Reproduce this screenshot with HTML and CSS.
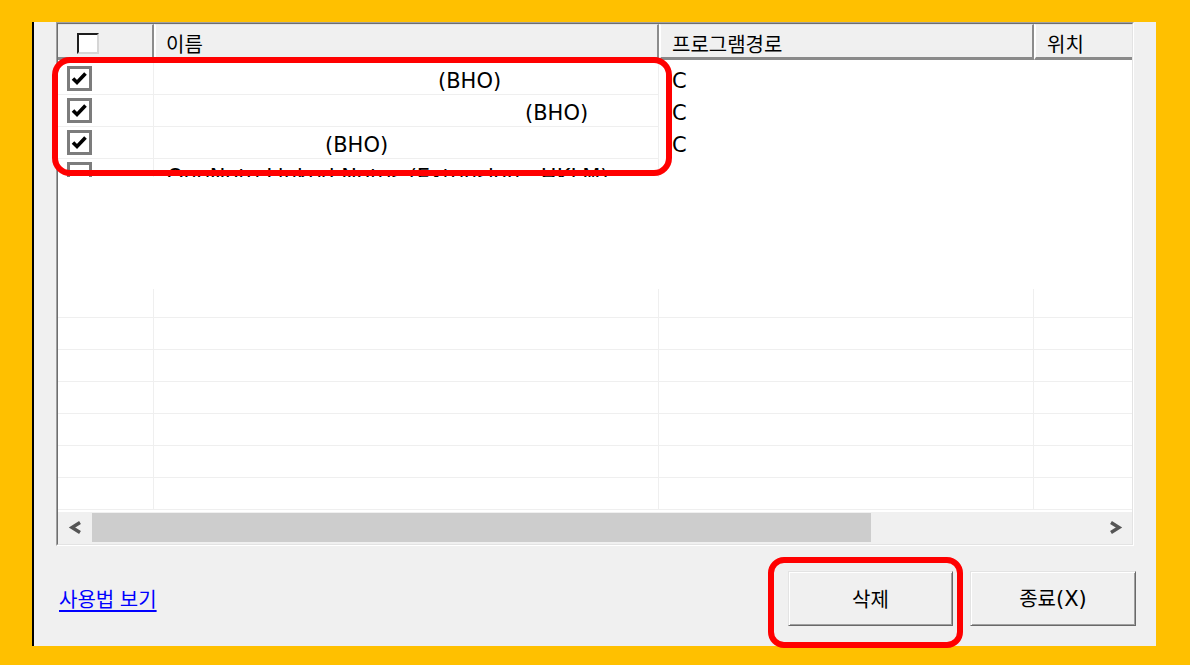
FILE: index.html
```html
<!DOCTYPE html>
<html lang="ko">
<head>
<meta charset="utf-8">
<title>BHO 목록</title>
<link rel="stylesheet" href="styles.css">
</head>
<body>
<div class="screen">
  <div class="dialog">
    <div class="listview">
      <div class="lv-inner">
        <div class="lv-header">
          <div class="hcell c1"><span class="hcheck"></span></div>
          <div class="hcell c2">이름</div>
          <div class="hcell c3">프로그램경로</div>
          <div class="hcell c4">위치</div>
        </div>
        <div class="lv-body">
          <div class="rows-top">
            <div class="row">
              <div class="cell c1"><svg class="cb" viewBox="0 0 25 25" width="25" height="25"><rect x="1.5" y="1.5" width="22" height="22" fill="#fff" stroke="#7c7c7c" stroke-width="3"/><path d="M6 12.5 L10 16.5 L18.5 7.5" fill="none" stroke="#000" stroke-width="3.6"/></svg></div>
              <div class="cell c2 txt n1">(BHO)</div>
              <div class="cell c3 txt">C</div>
              <div class="cell c4"></div>
            </div>
            <div class="row">
              <div class="cell c1"><svg class="cb" viewBox="0 0 25 25" width="25" height="25"><rect x="1.5" y="1.5" width="22" height="22" fill="#fff" stroke="#7c7c7c" stroke-width="3"/><path d="M6 12.5 L10 16.5 L18.5 7.5" fill="none" stroke="#000" stroke-width="3.6"/></svg></div>
              <div class="cell c2 txt n2">(BHO)</div>
              <div class="cell c3 txt">C</div>
              <div class="cell c4"></div>
            </div>
            <div class="row">
              <div class="cell c1"><svg class="cb" viewBox="0 0 25 25" width="25" height="25"><rect x="1.5" y="1.5" width="22" height="22" fill="#fff" stroke="#7c7c7c" stroke-width="3"/><path d="M6 12.5 L10 16.5 L18.5 7.5" fill="none" stroke="#000" stroke-width="3.6"/></svg></div>
              <div class="cell c2 txt n3">(BHO)</div>
              <div class="cell c3 txt">C</div>
              <div class="cell c4"></div>
            </div>
            <div class="row">
              <div class="cell c1"><svg class="cb" viewBox="0 0 25 25" width="25" height="25"><rect x="1.5" y="1.5" width="22" height="22" fill="#fff" stroke="#7c7c7c" stroke-width="3"/></svg></div>
              <div class="cell c2 txt n4">OneNote Linked Notes (Extension - HKLM)</div>
              <div class="cell c3"></div>
              <div class="cell c4"></div>
            </div>
          </div>
          <div class="blank"></div>
          <div class="rows-empty">
            <div class="row first"><div class="cell c1"></div><div class="cell c2"></div><div class="cell c3"></div><div class="cell c4"></div></div>
            <div class="row"><div class="cell c1"></div><div class="cell c2"></div><div class="cell c3"></div><div class="cell c4"></div></div>
            <div class="row"><div class="cell c1"></div><div class="cell c2"></div><div class="cell c3"></div><div class="cell c4"></div></div>
            <div class="row"><div class="cell c1"></div><div class="cell c2"></div><div class="cell c3"></div><div class="cell c4"></div></div>
            <div class="row"><div class="cell c1"></div><div class="cell c2"></div><div class="cell c3"></div><div class="cell c4"></div></div>
            <div class="row"><div class="cell c1"></div><div class="cell c2"></div><div class="cell c3"></div><div class="cell c4"></div></div>
            <div class="row"><div class="cell c1"></div><div class="cell c2"></div><div class="cell c3"></div><div class="cell c4"></div></div>
          </div>
        </div>
        <div class="hscroll">
          <div class="sbtn"><svg viewBox="0 0 15 13" width="15" height="13"><polyline points="12,1.5 4,6.5 12,11.5" fill="none" stroke="#555" stroke-width="3.4"/></svg></div>
          <div class="thumb"></div>
          <div class="track"></div>
          <div class="sbtn"><svg viewBox="0 0 15 13" width="15" height="13"><polyline points="3,1.5 11,6.5 3,11.5" fill="none" stroke="#555" stroke-width="3.4"/></svg></div>
        </div>
      </div>
    </div>
    <div class="footer">
      <a class="help" href="#">사용법 보기</a>
      <div class="buttons">
        <button class="btn del" type="button">삭제</button>
        <button class="btn" type="button">종료<span class="lat">(X)</span></button>
      </div>
    </div>
  </div>
  <div class="mark mark-rows"></div>
  <div class="mark mark-btn"></div>
</div>
</body>
</html>
```

FILE: styles.css
```css
* { box-sizing: border-box; }
html, body { margin: 0; padding: 0; }
body {
  background: #ffc000;
  font-family: "DejaVu Sans", "Noto Sans CJK KR", sans-serif;
}
.screen {
  position: relative;
  width: 1190px;
  height: 665px;
  overflow: hidden;
  background: #ffc000;
  padding-top: 22px;
  padding-left: 32px;
}
.dialog {
  width: 1124px;
  height: 624px;
  background: #f0f0f0;
  border-left: 2px solid #000;
  padding: 0 22px;
  display: flex;
  flex-direction: column;
}
.listview {
  width: 1078px;
  height: 524px;
  border: 1px solid;
  border-color: #a0a0a0 #ffffff #ffffff #a0a0a0;
}
.lv-inner {
  height: 100%;
  border: 1px solid;
  border-color: #6e6e6e #e3e3e3 #e3e3e3 #6e6e6e;
  background: #fff;
  display: flex;
  flex-direction: column;
}
.lv-header {
  display: flex;
  height: 36px;
  flex: none;
  background: #f0f0f0;
}
.c1 { width: 96px; }
.c2 { width: 505px; }
.c3 { width: 375px; }
.c4 { width: 98px; }
.hcell {
  height: 36px;
  border-top: 1px solid #e4e4e4;
  border-bottom: 3px solid #8a8a8a;
  padding-top: 5px;
  font-family: "Noto Sans CJK KR", sans-serif;
  font-size: 20px;
  line-height: 27px;
  color: #000;
  white-space: nowrap;
}
.hcell.c1, .hcell.c2, .hcell.c3 { border-right: 2px solid #8c8c8c; }
.hcell.c2, .hcell.c3, .hcell.c4 { border-left: 2px solid #ffffff; }
.hcell.c1 { padding-top: 8px; padding-left: 19px; }
.hcell.c2 { padding-left: 10px; }
.hcell.c3 { padding-left: 11px; }
.hcell.c4 { padding-left: 11px; }
.hcheck {
  display: block;
  width: 22px;
  height: 21px;
  background: #fff;
  border: 2px solid;
  border-color: #1e1e1e #d6d6d6 #d6d6d6 #1e1e1e;
}
.lv-body {
  flex: none;
  height: 452px;
  padding-top: 3px;
}
.rows-top {
  height: 114px;
  overflow: hidden;
}
.row {
  display: flex;
  height: 32px;
}
.cell {
  height: 100%;
  border-bottom: 1px solid #efefef;
  display: flex;
  align-items: center;
  white-space: nowrap;
}
.cell.c1, .cell.c2, .cell.c3 { border-right: 1px solid #efefef; }
.rows-top .cell.c3, .rows-top .cell.c4 { border-bottom-color: transparent; }
.rows-top .cell.c3 { border-right-color: transparent; }
.rows-top .cell.c1 { padding-left: 9px; }
.cb { display: block; }
.txt {
  font-size: 21px;
  color: #000;
  overflow: hidden;
  padding-top: 4px;
}
.n1 { padding-left: 284px; }
.n2 { padding-left: 371px; }
.n3 { padding-left: 171px; }
.n4 { padding-left: 13px; }
.rows-top .cell.c3 { padding-left: 13px; }
.blank { height: 112px; }
.rows-empty .row.first { height: 29px; }
.hscroll {
  flex: none;
  height: 32px;
  display: flex;
  background: #f0f0f0;
  padding: 1px 0 2px;
}
.sbtn {
  width: 34px;
  height: 29px;
  display: flex;
  align-items: center;
  justify-content: center;
}
.sbtn svg { display: block; }
.thumb {
  width: 779px;
  height: 29px;
  background: #cdcdcd;
}
.track { flex: 1; }
.footer {
  flex: 1;
  display: flex;
  align-items: center;
  justify-content: space-between;
  padding: 5px 0 0 3px;
  margin-right: -2px;
}
.help {
  font-family: "Noto Sans CJK KR", sans-serif;
  font-size: 20px;
  color: #0000ff;
  text-decoration: underline;
  text-underline-offset: 3px;
  text-decoration-thickness: 2px;
  line-height: 26px;
}
.buttons {
  display: flex;
  gap: 17px;
}
.btn {
  width: 166px;
  height: 55px;
  margin: 0;
  padding: 0;
  background: #f0f0f0;
  border: 1px solid;
  border-color: #e3e3e3 #696969 #696969 #e3e3e3;
  box-shadow: inset 1px 1px 0 #ffffff, inset -1px -1px 0 #a0a0a0;
  font-family: "Noto Sans CJK KR", sans-serif;
  font-size: 20px;
  color: #000;
  line-height: 26px;
}
.btn.del { width: 165px; }
.lat {
  font-family: "DejaVu Sans", sans-serif;
  font-size: 21px;
}
.mark {
  position: absolute;
  border: 6px solid #ff0000;
  pointer-events: none;
}
.mark-rows {
  left: 52px;
  top: 57px;
  width: 620px;
  height: 119px;
  border-radius: 18px;
}
.mark-btn {
  left: 768px;
  top: 557px;
  width: 195px;
  height: 91px;
  border-radius: 16px;
}
```
